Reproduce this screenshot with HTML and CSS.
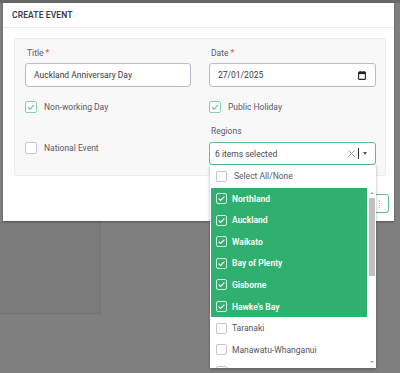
FILE: index.html
```html
<!DOCTYPE html>
<html>
<head>
<meta charset="utf-8">
<link rel="stylesheet" href="styles.css">
</head>
<body>
<div class="topbar"></div>
<div class="page">
  <div class="bg-panel"></div>
</div>
<div class="bottombar"></div>

<div class="modal">
  <div class="modal-header">CREATE EVENT</div>
  <div class="modal-body">
    <div class="card">
      <div class="field">
        <div class="lbl">Title <span class="req">*</span></div>
        <div class="input">Auckland Anniversary Day</div>
      </div>
      <div class="field">
        <div class="lbl">Date <span class="req">*</span></div>
        <div class="input date">
          <span>27/01/2025</span>
          <svg class="cal" width="8" height="9" viewBox="0 0 8 9"><rect x="0.6" y="1.1" width="6.8" height="7.3" rx="0.8" fill="none" stroke="#222" stroke-width="1.1"/><rect x="0.6" y="1.1" width="6.8" height="2" fill="#222"/><rect x="1.8" y="0" width="1" height="1.6" fill="#222"/><rect x="5.2" y="0" width="1" height="1.6" fill="#222"/></svg>
        </div>
      </div>
      <div class="check-row">
        <span class="box on"><svg width="12" height="12" viewBox="0 0 12 12"><path d="M3 6.2 L5.1 8.2 L9 4" fill="none" stroke="#5cc08a" stroke-width="1.1"/></svg></span>
        <span class="check-text">Non-working Day</span>
      </div>
      <div class="check-row">
        <span class="box on"><svg width="12" height="12" viewBox="0 0 12 12"><path d="M3 6.2 L5.1 8.2 L9 4" fill="none" stroke="#5cc08a" stroke-width="1.1"/></svg></span>
        <span class="check-text">Public Holiday</span>
      </div>
      <div class="check-row national">
        <span class="box"></span>
        <span class="check-text">National Event</span>
      </div>
      <div class="field regions">
        <div class="lbl">Regions</div>
        <div class="select">
          <span class="sel-text">6 items selected</span>
          <svg class="clear" width="7" height="7" viewBox="0 0 7 7"><path d="M0.5 0.5 L6.5 6.5 M6.5 0.5 L0.5 6.5" stroke="#9a9a9a" stroke-width="1"/></svg>
          <span class="caret-line"></span>
          <span class="tri"></span>
          <div class="dropdown">
            <div class="all-row">
              <span class="box sm"></span>
              <span>Select All/None</span>
            </div>
            <div class="dd-body">
              <div class="list">
                <div class="opt sel"><span class="box sm w"><svg width="11" height="11" viewBox="0 0 11 11"><path d="M2.6 5.6 L4.6 7.5 L8.4 3.6" fill="none" stroke="#fff" stroke-width="1.1"/></svg></span>Northland</div>
                <div class="opt sel"><span class="box sm w"><svg width="11" height="11" viewBox="0 0 11 11"><path d="M2.6 5.6 L4.6 7.5 L8.4 3.6" fill="none" stroke="#fff" stroke-width="1.1"/></svg></span>Auckland</div>
                <div class="opt sel"><span class="box sm w"><svg width="11" height="11" viewBox="0 0 11 11"><path d="M2.6 5.6 L4.6 7.5 L8.4 3.6" fill="none" stroke="#fff" stroke-width="1.1"/></svg></span>Waikato</div>
                <div class="opt sel"><span class="box sm w"><svg width="11" height="11" viewBox="0 0 11 11"><path d="M2.6 5.6 L4.6 7.5 L8.4 3.6" fill="none" stroke="#fff" stroke-width="1.1"/></svg></span>Bay of Plenty</div>
                <div class="opt sel"><span class="box sm w"><svg width="11" height="11" viewBox="0 0 11 11"><path d="M2.6 5.6 L4.6 7.5 L8.4 3.6" fill="none" stroke="#fff" stroke-width="1.1"/></svg></span>Gisborne</div>
                <div class="opt sel"><span class="box sm w"><svg width="11" height="11" viewBox="0 0 11 11"><path d="M2.6 5.6 L4.6 7.5 L8.4 3.6" fill="none" stroke="#fff" stroke-width="1.1"/></svg></span>Hawke's Bay</div>
                <div class="opt"><span class="box sm"></span>Taranaki</div>
                <div class="opt"><span class="box sm"></span>Manawatu-Whanganui</div>
                <div class="opt"><span class="box sm"></span></div>
              </div>
              <div class="scrollbar">
                <span class="arrow up"></span>
                <span class="thumb"></span>
                <span class="track"></span>
                <span class="arrow down"></span>
              </div>
            </div>
          </div>
        </div>
      </div>
    </div>
    <div class="footer">
      <div class="btn"><span class="dots"></span></div>
    </div>
  </div>
</div>
</body>
</html>
```

FILE: styles.css
```css
* { box-sizing: border-box; }
html, body { margin: 0; padding: 0; }
body {
  width: 400px;
  height: 373px;
  overflow: hidden;
  background: #7f7f7f;
  font-family: Roboto, "Liberation Sans", sans-serif;
  position: relative;
}
.topbar { height: 3px; background: #686868; }
.page { height: 362px; }
.bg-panel {
  margin-top: 218px;
  width: 101px;
  height: 93px;
  background: #7a7a7a;
  border-right: 1px solid #737373;
  border-bottom: 1px solid #737373;
}
.bottombar { height: 8px; background: #737373; }

.modal {
  position: absolute;
  left: 3px;
  top: 3px;
  width: 391px;
  height: 218px;
  background: #fff;
  box-shadow: 0 1px 2px rgba(0,0,0,0.35);
}
.modal-header {
  height: 25px;
  padding: 0 0 1px 9px;
  border-bottom: 1px solid #ececec;
  display: flex;
  align-items: center;
  font-size: 8.5px;
  font-weight: 600;
  color: #3b3d48;
  letter-spacing: 0.1px;
}
.modal-body { padding: 10px 8px 0 11px; }
.card {
  height: 138px;
  border: 1px solid #ececec;
  border-radius: 3px;
  background: #f8f8f9;
  padding: 8px 9px 0 10px;
  display: grid;
  grid-template-columns: 166px 167px;
  column-gap: 18px;
  align-items: start;
  align-content: start;
}
.lbl {
  height: 12px;
  line-height: 12px;
  font-size: 8.5px;
  color: #5a5a66;
  padding-left: 2px;
  margin-bottom: 4px;
}
.req { color: #e5484d; }
.input {
  height: 24px;
  border: 1px solid #b9b9c9;
  border-radius: 3px;
  background: #fff;
  padding: 0 0 0 8px;
  display: flex;
  align-items: center;
  font-size: 8.5px;
  color: #3a3a44;
}
.input.date { justify-content: space-between; padding-right: 9px; }
.cal { display: block; }

.check-row {
  margin-top: 14px;
  height: 12px;
  display: flex;
  align-items: center;
  gap: 7px;
  font-size: 8.5px;
  color: #5a5a66;
}
.check-row.national { margin-top: 29px; }
.box {
  width: 12px;
  height: 12px;
  border: 1px solid #c5c5d2;
  border-radius: 2px;
  background: #fff;
  flex: none;
  display: flex;
  align-items: center;
  justify-content: center;
}
.box svg { display: block; flex: none; }
.box.on { border-color: #86d1a8; }
.box.sm { width: 11px; height: 11px; }
.box.w { background: transparent; border-color: rgba(255,255,255,0.8); }

.field.regions { margin-top: 12px; }
.field.regions .lbl { margin-bottom: 5px; }
.select {
  position: relative;
  height: 23px;
  border: 1px solid #5cc08a;
  border-radius: 3px;
  background: #fff;
  display: flex;
  align-items: center;
  padding-left: 5px;
  font-size: 8.5px;
  color: #4a4a55;
}
.sel-text { flex: 1; }
.clear { display: block; margin-right: 3px; }
.caret-line { width: 1px; height: 11px; background: #333; margin-right: 4px; }
.tri {
  width: 0; height: 0;
  border-left: 2.5px solid transparent;
  border-right: 2.5px solid transparent;
  border-top: 3px solid #555;
  margin-right: 8px;
}

.dropdown {
  position: absolute;
  left: 0px;
  top: 22px;
  width: 166px;
  height: 203px;
  background: #fff;
  box-shadow: 0 1px 3px rgba(0,0,0,0.3);
  z-index: 5;
  display: flex;
  flex-direction: column;
}
.all-row {
  height: 22px;
  flex: none;
  display: flex;
  align-items: center;
  padding-left: 6px;
  gap: 7px;
  font-size: 8.5px;
  color: #5a5a66;
}
.dd-body { flex: 1; display: flex; min-height: 0; padding-top: 1px; }
.list { flex: 1; overflow: hidden; margin-left: 1px; }
.opt {
  height: 21.55px;
  display: flex;
  align-items: center;
  padding-left: 5px;
  gap: 5px;
  font-size: 8.5px;
  color: #555560;
}
.opt.sel {
  background: #30b06e;
  color: #fff;
  font-weight: 600;
}
.scrollbar {
  width: 9px;
  flex: none;
  display: flex;
  flex-direction: column;
  align-items: center;
  padding: 0 0 2px 0;
}
.arrow { width: 0; height: 0; border-left: 2px solid transparent; border-right: 2px solid transparent; flex: none; }
.arrow.up { border-bottom: 2px solid #a0a0a0; margin-top: 4px; margin-bottom: 4px; }
.arrow.down { border-top: 2px solid #a0a0a0; margin-bottom: 3px; }
.thumb { width: 6px; height: 78px; background: #c1c1c1; flex: none; margin-left: 1px; }
.track { flex: 1; }

.footer {
  display: flex;
  justify-content: flex-end;
  margin-top: 18px;
  margin-right: -3px;
}
.btn {
  width: 44px;
  height: 19px;
  border: 1px solid #5cc08a;
  border-radius: 3px;
  background: #fff;
  display: flex;
  align-items: center;
  justify-content: flex-end;
  padding-right: 8px;
}
.dots {
  width: 1px;
  height: 8px;
  border-left: 1.5px dotted #8fd3ae;
}
```
